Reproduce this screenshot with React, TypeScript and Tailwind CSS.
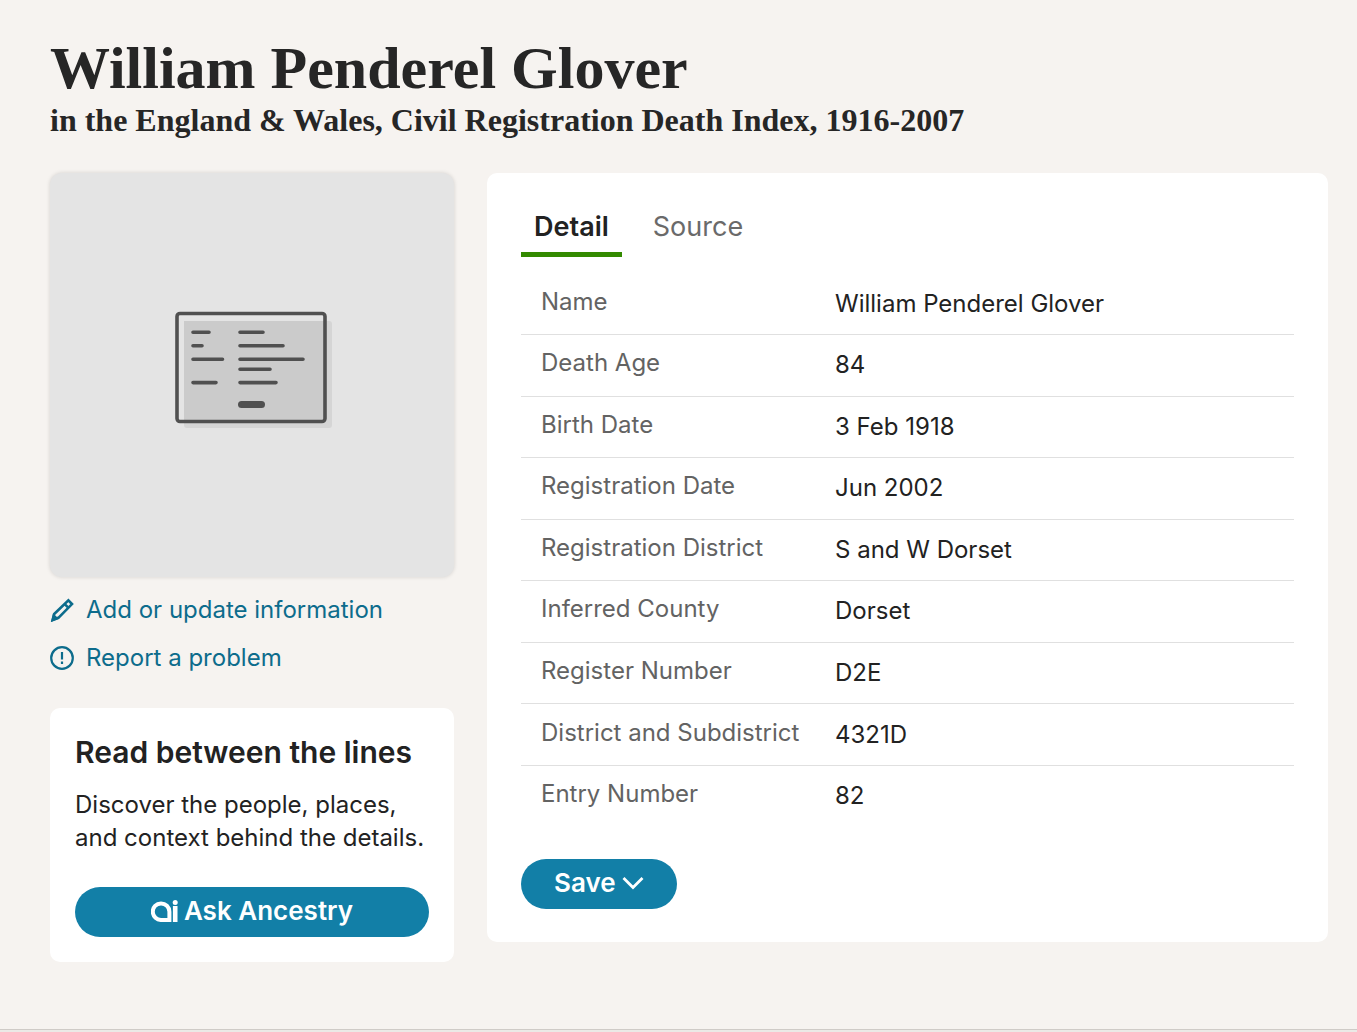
import React from 'react'

interface RecordField {
  label: string
  value: string
}

const fields: RecordField[] = [
  { label: 'Name', value: 'William Penderel Glover' },
  { label: 'Death Age', value: '84' },
  { label: 'Birth Date', value: '3 Feb 1918' },
  { label: 'Registration Date', value: 'Jun 2002' },
  { label: 'Registration District', value: 'S and W Dorset' },
  { label: 'Inferred County', value: 'Dorset' },
  { label: 'Register Number', value: 'D2E' },
  { label: 'District and Subdistrict', value: '4321D' },
  { label: 'Entry Number', value: '82' },
]

const RecordThumbnail: React.FC = () => (
  <div className="aspect-square rounded-xl bg-[#e4e4e4] shadow-[0_0_4px_rgba(0,0,0,0.14)]">
    <svg className="h-full w-full" viewBox="0 0 404 404" fill="none">
      {/* Record card with offset shadow */}
      <rect x="134" y="148" width="148" height="107" rx="3" fill="#d5d5d5" />
      <rect x="134" y="148" width="141" height="100" fill="#cbcbcb" />
      <rect x="127" y="140.5" width="148" height="108" rx="3" stroke="#505050" strokeWidth="3.6" />
      <g stroke="#505050" strokeWidth="3.6" strokeLinecap="round">
        <path d="M143 159.3h16M143 172.8h9M143 186.2h29.5M143 209.6h23" />
        <path d="M190 159.3h23M190 172.8h43M190 186.2h63M190 196.3h30M190 209.6h36" />
      </g>
      <path d="M191.5 231.6h20" stroke="#505050" strokeWidth="7" strokeLinecap="round" />
    </svg>
  </div>
)

const RecordActions: React.FC = () => (
  <div className="mt-[15px] flex flex-col items-start gap-3 text-2xl leading-9 text-[#0d6c8c]">
    <a href="#update" className="flex items-center gap-3">
      <svg className="h-6 w-6" viewBox="0 0 24 24" fill="none" stroke="currentColor" strokeWidth="2.6">
        <path d="M4.2 16 18.4 2.4l3.6 3.7L8.4 19.800 2.8 22z" />
        <path d="m14.2 5.600 4.600 4.600" />
        <path d="M.8 24 3 15.500l6 5.300z" fill="currentColor" stroke="none" />
      </svg>
      Add or update information
    </a>
    <a href="#report" className="flex items-center gap-3">
      <svg className="h-6 w-6" viewBox="0 0 24 24" fill="none" stroke="currentColor" strokeWidth="2.2">
        <circle cx="12" cy="12" r="10.8" />
        <path d="M12 6v7.5M12 15.5v2.6" />
      </svg>
      Report a problem
    </a>
  </div>
)

const AskCard: React.FC = () => (
  <section className="mt-8 rounded-[10px] bg-white px-[25px] pt-6 pb-[25px]">
    <h3 className="text-[30px] leading-10 font-semibold">Read between the lines</h3>
    <p className="mt-4 text-2xl leading-[33px]">
      Discover the people, places,
      <br />
      and context behind the details.
    </p>
    <button
      type="button"
      className="mt-[33px] flex h-[50px] w-full items-center justify-center gap-1.5 rounded-full bg-[#127fa7] pb-[3px] text-[26px] font-semibold text-white"
    >
      <svg className="h-[22px] w-[27px]" viewBox="0 0 27 22" fill="none">
        <path d="M18 20H10.5a8.300 8.300 0 1 1 7.900-8.300V22" stroke="currentColor" strokeWidth="4" />
        <path d="M24.2 6v16" stroke="currentColor" strokeWidth="4.6" />
        <circle cx="24.2" cy="2.5" r="2.5" fill="currentColor" />
      </svg>
      Ask Ancestry
    </button>
  </section>
)

const DetailPanel: React.FC = () => (
  <section className="rounded-[10px] bg-white px-[34px] pt-[34px] pb-[33px]">
    <div role="tablist" className="flex gap-[18px] text-[27px] leading-10">
      <button type="button" role="tab" aria-selected="true" className="border-b-5 border-[#338a00] px-[13px] pb-[5px] font-semibold">
        Detail
      </button>
      <button type="button" role="tab" aria-selected="false" className="border-b-5 border-transparent px-[13px] pb-[5px] text-[#6a6a6a]">
        Source
      </button>
    </div>

    <table className="mt-[17px] h-[552px] w-full text-left text-2xl">
      <tbody>
        {fields.map((field) => (
          <tr key={field.label} className="border-b border-[#e0e0e0] last:border-b-0">
            <th scope="row" className="w-[314px] pb-1 pl-5 font-normal text-[#636363]">
              {field.label}
            </th>
            <td>{field.value}</td>
          </tr>
        ))}
      </tbody>
    </table>

    <button
      type="button"
      className="mt-[33px] flex h-[50px] items-center gap-1.5 rounded-full bg-[#127fa7] px-[33px] pb-[3px] text-[26px] font-semibold text-white"
    >
      Save
      <svg className="h-3.5 w-[22px]" viewBox="0 0 22 14" fill="none" stroke="currentColor" strokeWidth="2.8">
        <path d="m1.5 2 9.5 9.5L20.5 2" />
      </svg>
    </button>
  </section>
)

const App: React.FC = () => {
  return (
    <div className="flex min-h-screen flex-col bg-[#f6f3f0] font-['Inter',sans-serif] text-[#222]">
      <main className="flex-1 pt-9 pr-[29px] pb-16 pl-[50px]">
        <header className="font-['Liberation_Serif',serif] font-bold text-[#262626]">
          <h1 className="text-[60px] leading-[64px]">William Penderel Glover</h1>
          <h2 className="text-[32px] leading-10">in the England &amp; Wales, Civil Registration Death Index, 1916-2007</h2>
        </header>

        <div className="mt-[33px] grid grid-cols-[404px_1fr] items-start gap-[33px]">
          <aside>
            <RecordThumbnail />
            <RecordActions />
            <AskCard />
          </aside>
          <DetailPanel />
        </div>
      </main>
      <footer className="h-[3px] border-t border-[#cfcbc7] bg-[#ebe9e6]" />
    </div>
  )
}

export default App
